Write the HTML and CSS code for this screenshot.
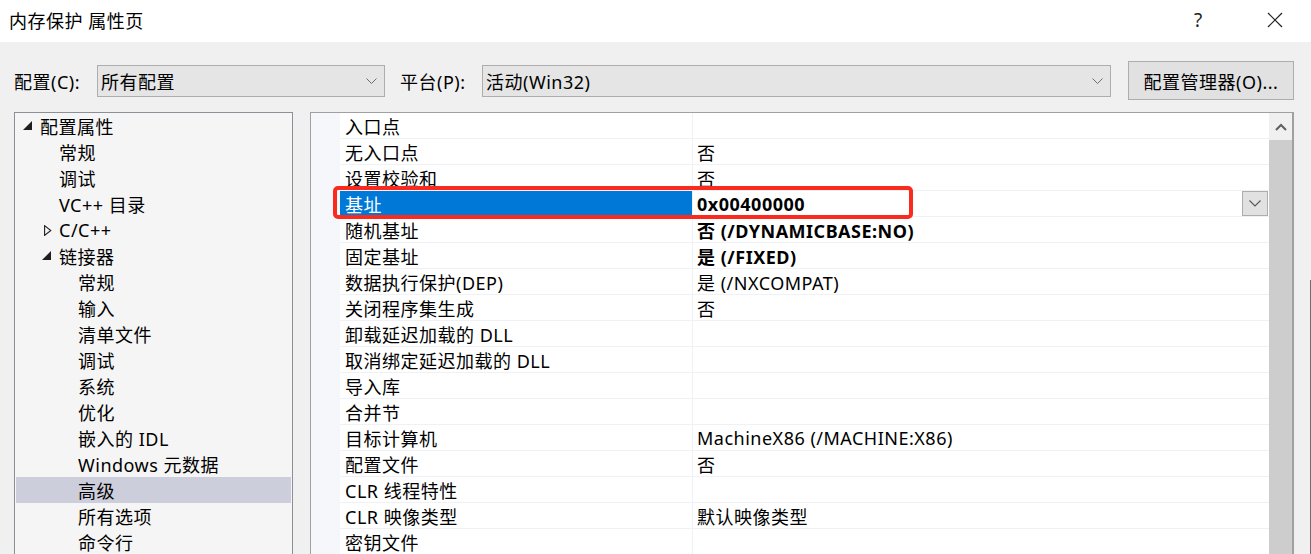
FILE: index.html
```html
<!DOCTYPE html>
<html lang="zh-CN">
<head>
<meta charset="utf-8">
<title>内存保护 属性页</title>
<link rel="stylesheet" href="styles.css">
</head>
<body>
<div class="window">
  <div class="titlebar">
    <span class="title">内存保护 属性页</span>
    <span class="help">?</span>
    <span class="close">
      <svg width="16" height="16" viewBox="0 0 16 16"><path d="M1 1L15 15M15 1L1 15" stroke="#222" stroke-width="1.2" fill="none"/></svg>
    </span>
  </div>

  <div class="toolbar">
    <span class="label">配置(C):</span>
    <div class="combo combo-config">
      <span>所有配置</span>
      <svg class="chev" width="11" height="6" viewBox="0 0 11 6"><path d="M0.5 0.5L5.5 5.5L10.5 0.5" stroke="#6d6d6d" stroke-width="1" fill="none"/></svg>
    </div>
    <span class="label label-platform">平台(P):</span>
    <div class="combo combo-platform">
      <span>活动(Win32)</span>
      <svg class="chev" width="11" height="6" viewBox="0 0 11 6"><path d="M0.5 0.5L5.5 5.5L10.5 0.5" stroke="#6d6d6d" stroke-width="1" fill="none"/></svg>
    </div>
    <button class="btn">配置管理器(O)...</button>
  </div>

  <div class="main">
    <div class="tree">
      <div class="node l0"><span class="tw tw-exp"><svg width="9" height="9" viewBox="0 0 9 9"><path d="M9 0L9 9L0 9Z" fill="#1e1e1e"/></svg></span>配置属性</div>
      <div class="node l1"><span class="tw"></span>常规</div>
      <div class="node l1"><span class="tw"></span>调试</div>
      <div class="node l1"><span class="tw"></span>VC++ 目录</div>
      <div class="node l1"><span class="tw tw-col"><svg width="8" height="11" viewBox="0 0 8 11"><path d="M0.6 0.6L6.8 5.5L0.6 10.4Z" fill="none" stroke="#1e1e1e" stroke-width="1.1"/></svg></span>C/C++</div>
      <div class="node l1"><span class="tw tw-exp"><svg width="9" height="9" viewBox="0 0 9 9"><path d="M9 0L9 9L0 9Z" fill="#1e1e1e"/></svg></span>链接器</div>
      <div class="node l2"><span class="tw"></span>常规</div>
      <div class="node l2"><span class="tw"></span>输入</div>
      <div class="node l2"><span class="tw"></span>清单文件</div>
      <div class="node l2"><span class="tw"></span>调试</div>
      <div class="node l2"><span class="tw"></span>系统</div>
      <div class="node l2"><span class="tw"></span>优化</div>
      <div class="node l2"><span class="tw"></span>嵌入的 IDL</div>
      <div class="node l2"><span class="tw"></span>Windows 元数据</div>
      <div class="node l2 selected"><span class="tw"></span>高级</div>
      <div class="node l2"><span class="tw"></span>所有选项</div>
      <div class="node l2"><span class="tw"></span>命令行</div>
    </div>

    <div class="grid">
      <div class="gutter"></div>
      <div class="props">
        <div class="row"><div class="name">入口点</div><div class="value"></div></div>
        <div class="row"><div class="name">无入口点</div><div class="value">否</div></div>
        <div class="row"><div class="name">设置校验和</div><div class="value">否</div></div>
        <div class="row active"><div class="name">基址</div><div class="value bold">0x00400000<span class="dd"><svg width="12" height="7" viewBox="0 0 12 7"><path d="M0.5 0.5L6 6L11.5 0.5" stroke="#555" stroke-width="1.1" fill="none"/></svg></span></div></div>
        <div class="row"><div class="name">随机基址</div><div class="value bold">否 (/DYNAMICBASE:NO)</div></div>
        <div class="row"><div class="name">固定基址</div><div class="value bold">是 (/FIXED)</div></div>
        <div class="row"><div class="name">数据执行保护(DEP)</div><div class="value">是 (/NXCOMPAT)</div></div>
        <div class="row"><div class="name">关闭程序集生成</div><div class="value">否</div></div>
        <div class="row"><div class="name">卸载延迟加载的 DLL</div><div class="value"></div></div>
        <div class="row"><div class="name">取消绑定延迟加载的 DLL</div><div class="value"></div></div>
        <div class="row"><div class="name">导入库</div><div class="value"></div></div>
        <div class="row"><div class="name">合并节</div><div class="value"></div></div>
        <div class="row"><div class="name">目标计算机</div><div class="value">MachineX86 (/MACHINE:X86)</div></div>
        <div class="row"><div class="name">配置文件</div><div class="value">否</div></div>
        <div class="row"><div class="name">CLR 线程特性</div><div class="value"></div></div>
        <div class="row"><div class="name">CLR 映像类型</div><div class="value">默认映像类型</div></div>
        <div class="row"><div class="name">密钥文件</div><div class="value"></div></div>
        <div class="highlight"></div>
      </div>
      <div class="scrollbar">
        <div class="sb-up"><svg width="12" height="8" viewBox="0 0 12 8"><path d="M1 7L6 2L11 7" stroke="#606060" stroke-width="2" fill="none"/></svg></div>
        <div class="sb-thumb"></div>
      </div>
    </div>
  </div>
</div>
</body>
</html>
```

FILE: styles.css
```css
* { box-sizing: border-box; }

html, body {
  margin: 0;
  padding: 0;
}

body {
  width: 1311px;
  height: 554px;
  overflow: hidden;
  background: #f0f0f0;
  font-family: "Noto Sans", "Noto Sans CJK SC", sans-serif;
  font-size: 18px;
  letter-spacing: 0.5px;
  color: #000;
}

.window {
  height: 554px;
  position: relative;
}

.window::after {
  content: "";
  position: absolute;
  right: 0;
  top: 280px;
  bottom: 0;
  width: 1px;
  background: #6e6e6e;
}

.titlebar {
  height: 42px;
  background: #fff;
  display: flex;
  align-items: center;
  padding-left: 9px;
}

.title {
  flex: 1;
  padding-bottom: 3px;
}

.help {
  width: 20px;
  font-size: 19px;
  color: #222;
  margin-right: 53px;
  padding-bottom: 3px;
}

.close {
  width: 16px;
  height: 16px;
  margin-right: 28px;
  margin-bottom: 3px;
  display: flex;
}

.toolbar {
  display: flex;
  align-items: center;
  height: 39px;
  margin-top: 19px;
  margin-bottom: 12px;
  padding-left: 14px;
}

.label {
  width: 83px;
}

.label-platform {
  width: 82px;
  margin-left: 15px;
}

.combo {
  height: 32px;
  background: #e5e5e5;
  border: 1px solid #adadad;
  display: flex;
  align-items: center;
  justify-content: space-between;
  padding: 0 7px 0 3px;
}

.combo-config { width: 288px; }
.combo-platform { width: 629px; }

.btn {
  margin-left: 17px;
  width: 166px;
  height: 39px;
  background: #e1e1e1;
  border: 1px solid #adadad;
  font-family: inherit;
  font-size: 18px;
  letter-spacing: 0.5px;
  color: #000;
  padding: 0;
}

.main {
  display: flex;
  padding-left: 14px;
  height: 460px;
}

.tree {
  width: 279px;
  background: #f5f5f5;
  border: 1px solid #8c8f96;
  border-bottom: none;
  padding: 0 1px;
}

.node {
  height: 26px;
  display: flex;
  align-items: center;
  white-space: nowrap;
}

.node .tw {
  width: 19px;
  display: flex;
  justify-content: flex-start;
  align-items: center;
  height: 26px;
}

.node .tw-exp { padding-left: 2px; padding-bottom: 1px; }
.node .tw-col { padding-left: 4px; }

.l0 { padding-left: 5px; }
.l1 { padding-left: 24px; }
.l2 { padding-left: 43px; }

.node.selected { background: #cccedb; }

.grid {
  margin-left: 17px;
  width: 984px;
  display: flex;
  border: 1px solid #a0a0a0;
  border-bottom: none;
  background: #fff;
}

.gutter {
  width: 29px;
  background: #f5f7fb;
}

.props {
  flex: 1;
  position: relative;
}

.row {
  display: flex;
  height: 26px;
  border-bottom: 1px solid #f0f1f5;
}

.name {
  width: 352px;
  padding-left: 5px;
  display: flex;
  align-items: center;
  white-space: nowrap;
}

.value {
  flex: 1;
  border-left: 1px solid #f0f1f5;
  padding-left: 4px;
  display: flex;
  align-items: center;
  white-space: nowrap;
  position: relative;
}

.bold { font-weight: 700; }

.row.active .name {
  background: #0078d7;
  color: #fff;
}

.dd {
  position: absolute;
  right: 1px;
  top: 0;
  width: 26px;
  height: 25px;
  background: #e1e1e1;
  border: 1px solid #adadad;
  display: flex;
  align-items: center;
  justify-content: center;
}

.highlight {
  position: absolute;
  left: -7px;
  top: 73px;
  width: 580px;
  height: 33px;
  border: 4px solid #fa2a1e;
  border-radius: 5px;
}

.scrollbar {
  width: 24px;
  border-right: 1px solid #a0a0a0;
  display: flex;
  flex-direction: column;
  background: #f0f0f0;
}

.sb-up {
  height: 27px;
  display: flex;
  align-items: center;
  justify-content: center;
}

.sb-thumb {
  flex: 1;
  background: #cdcdcd;
}
```
